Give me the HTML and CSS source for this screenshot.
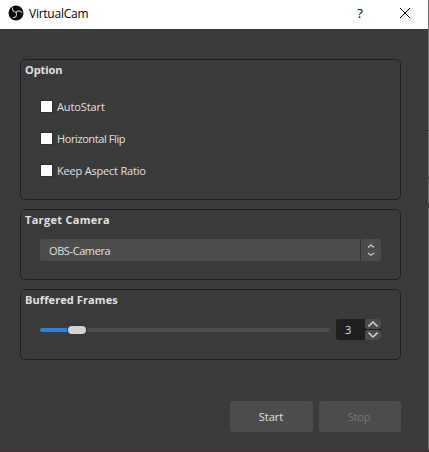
FILE: index.html
```html
<!DOCTYPE html>
<html lang="en">
<head>
<meta charset="utf-8">
<title>VirtualCam</title>
<link rel="stylesheet" href="styles.css">
</head>
<body>
<div class="window">
  <header class="titlebar">
    <svg class="logo" width="16" height="16" viewBox="0 0 16 16">
      <circle cx="8" cy="8" r="7.5" fill="#08080a"/>
      <g fill="none" stroke="#c4c4c4" stroke-width="1.1" stroke-linecap="round">
        <path d="M4.6 2.8C4.2 5.5 5.6 7.2 8 7.3"/>
        <path d="M13.9 7.5C12 5.2 9.4 5.4 8.1 7.4"/>
        <path d="M5.2 12.6C8 12.5 9.5 10 8 7.4"/>
      </g>
    </svg>
    <h1 class="title">VirtualCam</h1>
    <span class="help">?</span>
    <svg class="close" width="10" height="10" viewBox="0 0 10 10"><path d="M0 0 10 10M10 0 0 10" stroke="#000" stroke-width="1"/></svg>
  </header>
  <main class="content">
    <section class="group group-options">
      <h2 class="heading heading-option">Option</h2>
      <div class="checks">
        <label class="check"><span class="box"></span><span class="auto">AutoStart</span></label>
        <label class="check"><span class="box"></span><span class="flip">Horizontal Flip</span></label>
        <label class="check"><span class="box"></span><span class="ratio">Keep Aspect Ratio</span></label>
      </div>
    </section>
    <section class="group">
      <h2 class="heading heading-target">Target Camera</h2>
      <div class="combo">
        <span class="value">OBS-Camera</span>
        <span class="drop"><svg width="8" height="12" viewBox="0 0 8 12"><path d="M1 3.5 4 1 7 3.5M1 9 4 11.3 7 9" fill="none" stroke="#d0d0d0" stroke-width="1.1"/></svg></span>
      </div>
    </section>
    <section class="group">
      <h2 class="heading heading-frames">Buffered Frames</h2>
      <div class="frames">
        <div class="slider"><span class="fill"></span><span class="thumb"></span><span class="rest"></span></div>
        <div class="spin">
          <span class="number">3</span>
          <span class="steps">
            <span class="step"><svg width="12" height="8" viewBox="0 0 12 8"><path d="M1.5 6.3 6 2 10.5 6.3" fill="none" stroke="#d0d0d0" stroke-width="1.6"/></svg></span>
            <span class="step"><svg width="12" height="8" viewBox="0 0 12 8"><path d="M1.5 1.7 6 6 10.5 1.7" fill="none" stroke="#d0d0d0" stroke-width="1.6"/></svg></span>
          </span>
        </div>
      </div>
    </section>
    <footer class="actions">
      <button class="button start">Start</button>
      <button class="button stop" disabled>Stop</button>
    </footer>
  </main>
</div>
</body>
</html>
```
FILE: styles.css
```css
* { box-sizing: border-box; }
body { margin: 0; background: #3a3a3a; font: 11px/14px "Open Sans", "Noto Sans", sans-serif; color: #e1e0e1; }
.window {
  width: 429px; height: 452px; overflow: hidden; padding-right: 1px; border-bottom: 2px solid #3c3538;
  background: linear-gradient(#707070 0 130px, #444 130px 131px, #707070 131px 176px, #505050 176px 179px, #707070 179px 203px, #404040 203px 208px, #707070 208px) right / 1px 100% no-repeat #3a3a3a;
}
.titlebar { display: flex; align-items: center; height: 29px; padding: 0 18px 3px 8px; background: #fff; color: #000; }
.logo { flex: none; }
.title { flex: 1; margin: 0 0 0 5px; padding-top: 1px; font-size: 12px; font-weight: 400; line-height: 16px; letter-spacing: -.25px; }
.help { width: 8px; margin-right: 36px; font-size: 13px; text-align: center; }
.close { flex: none; overflow: visible; }
.content { display: flex; flex-direction: column; gap: 9px; padding: 30px 27px 0 20px; }
.group { height: 71px; border: 1px solid #1f1f1f; border-radius: 5px; padding: 3px 19px 0; }
.group-options { height: 141px; }
.heading { margin: 0 0 0 -15px; font-size: 11px; line-height: 14px; font-weight: 700; }
.heading-option { letter-spacing: -.1px; }
.heading-target { letter-spacing: .3px; }
.heading-frames { letter-spacing: .1px; }
.checks { display: flex; flex-direction: column; gap: 18px; margin-top: 23px; }
.check { display: flex; align-items: center; gap: 5px; height: 14px; padding-left: 1px; }
.box { width: 11px; height: 11px; margin-bottom: 1px; background: #fff; outline: 1px solid #303030; }
.auto { letter-spacing: -.1px; }
.flip { letter-spacing: -.4px; }
.ratio { letter-spacing: -.2px; }
.combo { display: flex; height: 22px; margin-top: 12px; border-radius: 3px; overflow: hidden; background: #4c4c4c; }
.value { flex: 1; padding: 5px 0 0 9px; letter-spacing: -.4px; }
.drop { display: flex; align-items: center; justify-content: center; width: 21px; border-left: 1px solid #303030; }
.frames { display: flex; align-items: center; justify-content: space-between; margin-top: 12px; height: 21px; }
.slider { display: flex; align-items: center; width: 290px; }
.fill { width: 28px; height: 4px; border-radius: 2px 0 0 2px; background: #2a82da; }
.thumb { width: 18px; height: 8px; border-radius: 3px; background: #d2d2d2; outline: 1px solid #343434; z-index: 1; }
.rest { flex: 1; height: 4px; border-radius: 0 2px 2px 0; background: #4c4c4c; }
.spin { display: flex; width: 45px; height: 21px; border-radius: 3px; overflow: hidden; background: #1f1f1f; }
.number { flex: 1; padding: 4px 0 0 9px; }
.steps { display: flex; flex-direction: column; gap: 1px; width: 16px; }
.step { display: flex; align-items: center; justify-content: center; height: 10px; border-radius: 2px; background: #4c4c4c; }
.actions { display: flex; justify-content: flex-end; gap: 6px; margin-top: 32px; }
.button { width: 83px; height: 31px; padding: 1px 0 0; border: 0; border-radius: 3px; background: #4c4c4c; color: #e1e0e1; font: inherit; }
.start { padding-right: 1px; }
.stop { width: 82px; padding-right: 2px; color: #777; letter-spacing: -.2px; }
```
